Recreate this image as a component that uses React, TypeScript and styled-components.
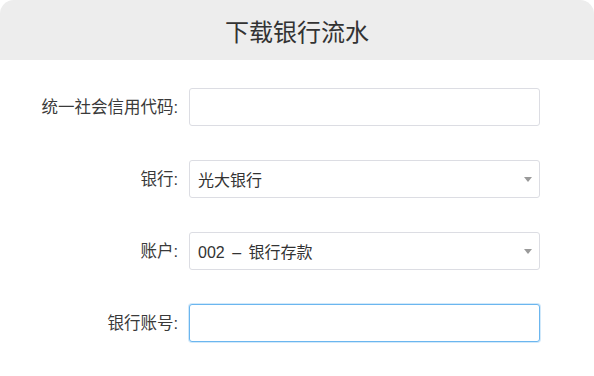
import React from "react";
import styled, { createGlobalStyle } from "styled-components";

const GlobalStyle = createGlobalStyle`
  html, body { margin: 0; padding: 0; background: #ffffff; }
  body { font-family: "Liberation Sans", "Noto Sans CJK SC", sans-serif; }
`;

const Dialog = styled.div`
  width: 594px;
  height: 376px;
  background: #ffffff;
  display: flex;
  flex-direction: column;
`;

const Header = styled.div`
  height: 60px;
  background: #ededed;
  border-radius: 14px 14px 0 0;
  display: flex;
  align-items: center;
  justify-content: center;
  font-family: "Noto Sans CJK SC", sans-serif;
  font-size: 24px;
  color: #333333;
`;

const Form = styled.div`
  display: grid;
  grid-template-columns: 178px 351px;
  column-gap: 11px;
  row-gap: 34px;
  padding-top: 28px;
  align-items: center;
`;

const Label = styled.label`
  text-align: right;
  font-family: "Liberation Sans", "Noto Sans CJK SC", sans-serif;
  font-size: 16.5px;
  color: #3a3a3a;
  line-height: 38px;
  white-space: nowrap;
`;

const Field = styled.div<{ $focused?: boolean }>`
  position: relative;
  box-sizing: border-box;
  height: 38px;
  border: 1px solid ${(p) => (p.$focused ? "#6bb6ef" : "#dcdde3")};
  box-shadow: ${(p) => (p.$focused ? "0 0 0 1px rgba(107,182,239,0.3)" : "none")};
  border-radius: 3px;
  background: #ffffff;
  display: flex;
  align-items: center;
  padding: 0 8px;
  font-family: "Liberation Sans", "Noto Sans CJK SC", sans-serif;
  font-size: 16px;
  word-spacing: 3px;
  color: #333333;
`;

const Caret = styled.span`
  position: absolute;
  right: 7px;
  top: 50%;
  margin-top: -2px;
  width: 0;
  height: 0;
  border-left: 4px solid transparent;
  border-right: 4px solid transparent;
  border-top: 5px solid #9a9a9a;
`;

export default function App() {
  return (
    <>
      <GlobalStyle />
      <Dialog>
        <Header>下载银行流水</Header>
        <Form>
          <Label>统一社会信用代码:</Label>
          <Field />
          <Label>银行:</Label>
          <Field>
            光大银行
            <Caret />
          </Field>
          <Label>账户:</Label>
          <Field>
            002 – 银行存款
            <Caret />
          </Field>
          <Label>银行账号:</Label>
          <Field $focused />
        </Form>
      </Dialog>
    </>
  );
}
